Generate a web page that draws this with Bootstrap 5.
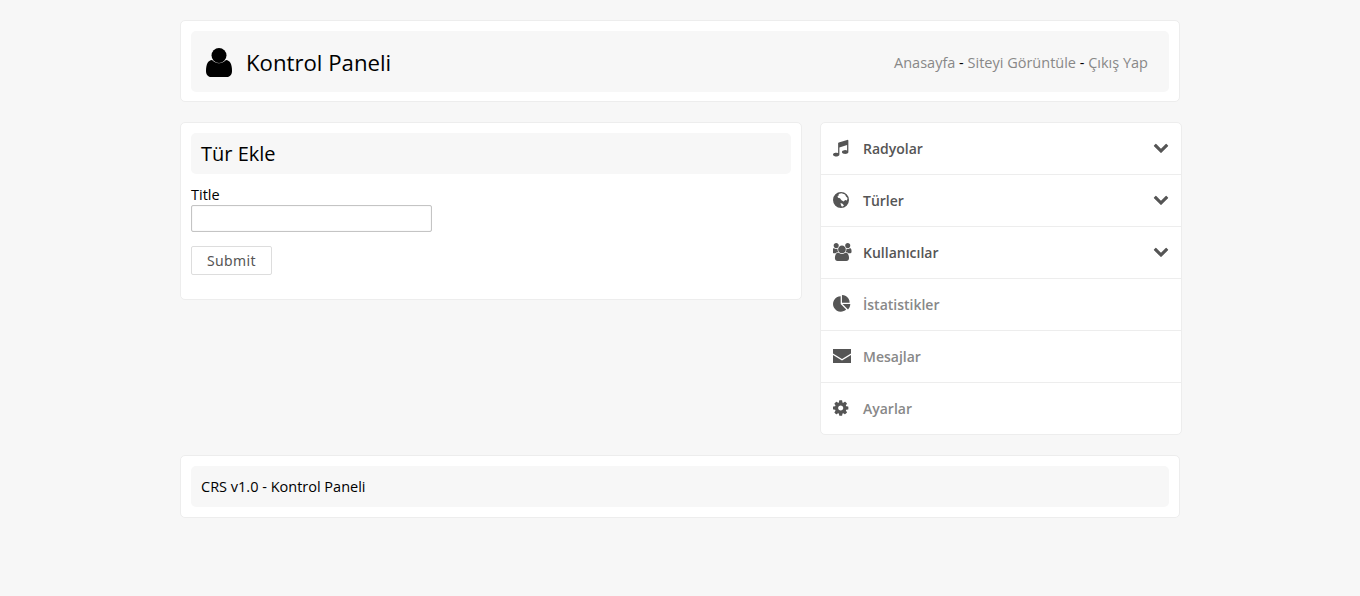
<!DOCTYPE html>
<html lang="tr">
<head>
    <meta charset="UTF-8">
    <meta name="viewport" content="width=device-width, initial-scale=1.0">
    <title>Kontrol Paneli</title>
    <link href="https://cdn.jsdelivr.net/npm/bootstrap@5.3.0/dist/css/bootstrap.min.css" rel="stylesheet">
    <style>
        body { background: #f7f7f7; font-family: "Open Sans", sans-serif; font-size: 14.5px; color: #000; }
        .page-wrap { width: 1000px; margin: 0 auto; padding-top: 20px; }
        .white-box { background: #fff; border: 1px solid #ededed; border-radius: 5px; padding: 10px; }
        .head-box { padding-bottom: 9px; }
        .inner-head { background: #f7f7f7; border-radius: 5px; }
        .top-head { height: 61px; padding: 2px 21px 0 15px; }
        .top-head .user-icon { width: 26px; height: 29px; margin: 0 14px 0 0; }
        .top-head h1 { font-size: 22.2px; font-weight: 400; margin: 0; padding-top: 1px; line-height: 30px; }
        .top-links { padding-top: 1px; }
        .top-links a { color: #888; text-decoration: none; }
        .main-row { margin-top: 20px; gap: 18px; width: 1002px; }
        .left-col { width: 622px; height: 178px; }
        .form-head { height: 41px; padding: 0 10px; font-size: 20px; line-height: 41px; margin: 0; font-weight: 400; }
        .field-label { display: block; line-height: 18px; margin: 12px 0 1px; }
        .title-input { display: block; width: 241px; height: 27px; border: 1px solid #c4c4c4; border-radius: 2px; background: #fff; box-shadow: inset 0 0 1px #ccc; }
        .submit-btn { width: 81px; height: 29px; margin-top: 14px; padding: 0; background: #fff; border: 1px solid #ddd; border-radius: 2px; color: #555; font-size: 14px; letter-spacing: .4px; font-family: "Noto Sans", sans-serif; }
        .side-col { width: 362px; }
        .side-list { border: 1px solid #ededed; border-radius: 5px; overflow: hidden; background: #fff; }
        .side-item { height: 52px; padding: 0 12px; border-bottom: 1px solid #ededed; font-size: 14px; font-weight: 600; color: #888; text-decoration: none; }
        .side-item:last-child { border-bottom: 0; height: 51px; }
        .side-item.dark-item { color: #555; }
        .side-icon { width: 30px; height: 18px; margin-bottom: 2px; fill: #555; flex: none; }
        .side-chevron { width: 16px; height: 16px; fill: #555; margin: 0 0 4px auto; }
        .foot-box { margin-top: 20px; }
        .foot-inner { height: 41px; padding: 0 10px; line-height: 41px; }
    </style>
</head>
<body>
    <div class="page-wrap">
        <!-- Header -->
        <div class="white-box head-box">
            <div class="inner-head top-head d-flex align-items-center">
                <svg class="user-icon" viewBox="0 0 26 29"><circle cx="13" cy="7.500" r="7.500"/><path d="M0 23c0-7 2-10.500 6-11 1.800 2 4.200 3.200 7 3.200s5.200-1.200 7-3.200c4 .5 6 4 6 11 0 3.500-2 6-5 6H5c-3 0-5-2.500-5-6z"/></svg>
                <h1>Kontrol Paneli</h1>
                <div class="top-links ms-auto">
                    <a href="#">Anasayfa</a> - <a href="#">Siteyi Görüntüle</a> - <a href="#">Çıkış Yap</a>
                </div>
            </div>
        </div>

        <div class="main-row d-flex align-items-start">
            <!-- Form -->
            <div class="white-box left-col">
                <h2 class="inner-head form-head">Tür Ekle</h2>
                <form>
                    <label class="field-label" for="title">Title</label>
                    <input class="title-input" id="title" type="text">
                    <button class="submit-btn" type="button">Submit</button>
                </form>
            </div>

            <!-- Sidebar -->
            <div class="side-col side-list d-flex flex-column">
                <a href="#" class="side-item dark-item d-flex align-items-center">
                    <svg class="side-icon" viewBox="128 0 3000 1792" preserveAspectRatio="xMinYMid meet"><path d="M1664 176v1120q0 50-34 89t-86 60.500-103.500 32-96.500 10.500-96.500-10.500-103.500-32-86-60.500-34-89 34-89 86-60.500 103.500-32 96.500-10.500q105 0 192 39v-537l-768 237v709q0 50-34 89t-86 60.500-103.500 32-96.500 10.500-96.500-10.500-103.500-32-86-60.500-34-89 34-89 86-60.500 103.500-32 96.500-10.500q105 0 192 39v-967q0-31 19-56.500t49-35.500l832-256q12-4 28-4 40 0 68 28t28 68z"/></svg>
                    Radyolar
                    <svg class="side-chevron" viewBox="0 0 1792 1792"><path d="M1683 808l-742 741q-19 19-45 19t-45-19l-742-741q-19-19-19-45.500t19-45.500l166-165q19-19 45-19t45 19l531 531 531-531q19-19 45-19t45 19l166 165q19 19 19 45.500t-19 45.500z"/></svg>
                </a>
                <a href="#" class="side-item dark-item d-flex align-items-center">
                    <svg class="side-icon" viewBox="0 0 30 18" preserveAspectRatio="xMinYMid meet"><path fill-rule="evenodd" d="M8 1a8 8 0 1 0 0 16A8 8 0 0 0 8 1zM5.500 3l3-.8 3.500 1.300 1 2 1.500 1.500-.5 2.500-1.800-.5-1.700 1.500-2-1.200-1.500-2-2-.5-.5-1.800 1.500-.8zM7.500 12l2 .8 1.500 1.700-2 1.300-1-1.500z"/></svg>
                    Türler
                    <svg class="side-chevron" viewBox="0 0 1792 1792"><path d="M1683 808l-742 741q-19 19-45 19t-45-19l-742-741q-19-19-19-45.500t19-45.500l166-165q19-19 45-19t45 19l531 531 531-531q19-19 45-19t45 19l166 165q19 19 19 45.500t-19 45.500z"/></svg>
                </a>
                <a href="#" class="side-item dark-item d-flex align-items-center">
                    <svg class="side-icon" viewBox="0 0 3000 1792" preserveAspectRatio="xMinYMid meet"><path d="M529 896q-162 5-265 128h-134q-82 0-138-40.500t-56-118.500q0-353 124-353 6 0 43.500 21t97.500 42.500 119 21.500q67 0 133-23-5 37-5 66 0 139 81 256zm1071 637q0 120-73 189.500t-194 69.500h-874q-121 0-194-69.500t-73-189.500q0-53 3.500-103.500t14-109 26.500-108.500 43-97.500 62-81 85.500-53.500 111.500-20q10 0 43 21.500t73 48 107 48 135 21.500 135-21.500 107-48 73-48 43-21.500q61 0 111.500 20t85.500 53.500 62 81 43 97.500 26.500 108.500 14 109 3.500 103.500zm-1024-1277q0 106-75 181t-181 75-181-75-75-181 75-181 181-75 181 75 75 181zm704 384q0 159-112.500 271.500t-271.500 112.500-271.500-112.500-112.500-271.500 112.500-271.500 271.500-112.500 271.500 112.500 112.500 271.500zm576 225q0 78-56 118.500t-138 40.500h-134q-103-123-265-128 81-117 81-256 0-29-5-66 66 23 133 23 59 0 119-21.500t97.500-42.500 43.500-21q124 0 124 353zm-128-609q0 106-75 181t-181 75-181-75-75-181 75-181 181-75 181 75 75 181z"/></svg>
                    Kullanıcılar
                    <svg class="side-chevron" viewBox="0 0 1792 1792"><path d="M1683 808l-742 741q-19 19-45 19t-45-19l-742-741q-19-19-19-45.500t19-45.500l166-165q19-19 45-19t45 19l531 531 531-531q19-19 45-19t45 19l166 165q19 19 19 45.500t-19 45.500z"/></svg>
                </a>
                <a href="#" class="side-item d-flex align-items-center">
                    <svg class="side-icon" viewBox="0 0 3000 1792" preserveAspectRatio="xMinYMid meet"><path d="M768 890l546 546q-106 108-247.500 168t-298.500 60q-209 0-385.500-103t-279.500-279.500-103-385.500 103-385.500 279.500-279.500 385.500-103v762zm187 6h773q0 157-60 298.500t-168 247.500zm709-128h-768v-768q209 0 385.500 103t279.500 279.500 103 385.500z"/></svg>
                    İstatistikler
                </a>
                <a href="#" class="side-item d-flex align-items-center">
                    <svg class="side-icon" viewBox="0 0 30 18" preserveAspectRatio="xMinYMid meet"><path d="M0 2h18v4.500L9 12 0 6.500zM0 8l9 5.500L18 8v8H0z"/></svg>
                    Mesajlar
                </a>
                <a href="#" class="side-item d-flex align-items-center">
                    <svg class="side-icon" viewBox="128 0 3000 1792" preserveAspectRatio="xMinYMid meet"><path d="M1152 896q0-106-75-181t-181-75-181 75-75 181 75 181 181 75 181-75 75-181zm512-109v222q0 12-8 23t-20 13l-185 28q-19 54-39 91 35 50 107 138 10 12 10 25t-9 23q-27 37-99 108t-94 71q-12 0-26-9l-138-108q-44 23-91 38-16 136-29 186-7 28-36 28h-222q-14 0-24.500-8.500t-11.500-21.500l-28-184q-49-16-90-37l-141 107q-10 9-25 9-14 0-25-11-126-114-165-168-7-10-7-23 0-12 8-23 15-21 51-66.500t54-70.500q-27-50-41-99l-183-27q-13-2-21-12.500t-8-23.500v-222q0-12 8-23t19-13l186-28q14-46 39-92-40-57-107-138-10-12-10-24 0-10 9-23 26-36 98.500-107.500t94.500-71.500q13 0 26 10l138 107q44-23 91-38 16-136 29-186 7-28 36-28h222q14 0 24.500 8.500t11.500 21.500l28 184q49 16 90 37l142-107q9-9 24-9 13 0 25 10 129 119 165 170 7 8 7 22 0 12-8 23-15 21-51 66.500t-54 70.500q26 50 41 98l183 28q13 2 21 12.500t8 23.500z"/></svg>
                    Ayarlar
                </a>
            </div>
        </div>

        <!-- Footer -->
        <div class="white-box foot-box">
            <div class="inner-head foot-inner">CRS v1.0 - Kontrol Paneli</div>
        </div>
    </div>

    <script src="https://cdn.jsdelivr.net/npm/bootstrap@5.3.0/dist/js/bootstrap.bundle.min.js"></script>
</body>
</html>
